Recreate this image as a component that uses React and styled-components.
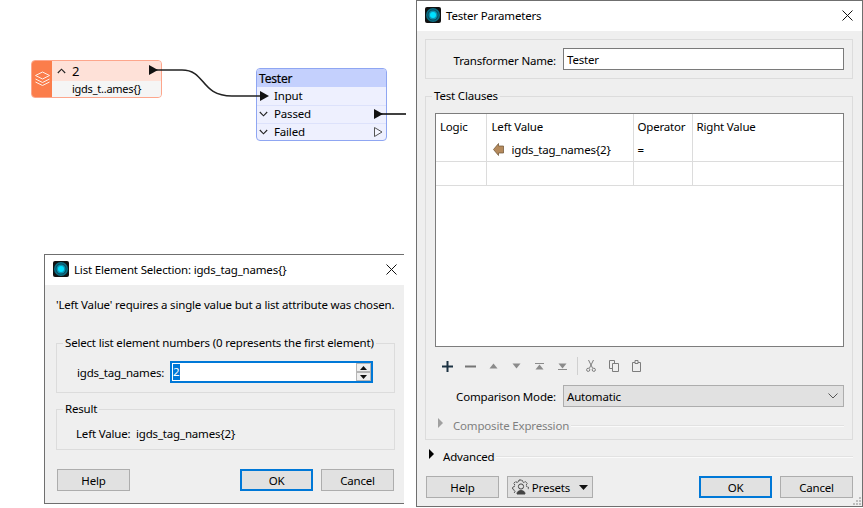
import React from "react";
import styled, { createGlobalStyle } from "styled-components";

const Global = createGlobalStyle`
  html, body { margin: 0; padding: 0; background: #fff; }
  body { width: 863px; height: 508px; overflow: hidden; position: relative; font: 11.5px "Noto Sans", "Open Sans", sans-serif; color: #000; }
  * { box-sizing: border-box; }
`;

const Canvas = styled.div`position: relative; width: 863px; height: 508px; overflow: hidden; letter-spacing: -0.18px;`;
const Wires = styled.svg`position: absolute; left: 0; top: 0; width: 863px; height: 508px; pointer-events: none; z-index: 2;`;

const NodeBox = styled.div`
  position: absolute; left: ${p => p.$x}px; top: ${p => p.$y}px; width: ${p => p.$w}px; height: ${p => p.$h}px;
  border: 1px solid ${p => p.$border}; border-radius: 4px; overflow: hidden; background: ${p => p.$bg};
`;
const SourceNode = styled(NodeBox)`display: flex;`;
const SourceStrip = styled.div`width: 20px; background: #fb7d4b; display: flex; align-items: center; justify-content: center;`;
const SourceBody = styled.div`flex: 1; display: flex; flex-direction: column;`;
const SourceHead = styled.div`height: 20px; background: #fee1d8; display: flex; align-items: center; padding-left: 5px; gap: 6px; font-size: 13px;`;
const SourceAttr = styled.div`height: 16px; background: #f5f5f5; padding-left: 20px; line-height: 15px; font-size: 11px; letter-spacing: -0.25px;`;
const NodeTitle = styled.div`height: 18px; background: #c4d0fd; padding-left: 2px; line-height: 19px; font-size: 12px; -webkit-text-stroke: 0.2px #000;`;
const PortRow = styled.div`
  height: 18px; display: flex; align-items: center; padding: 0 0 2px 2px; gap: 6px;
  border-top: ${p => (p.$line ? "1px solid #dde2fb" : "none")};
`;
const PortSpacer = styled.span`width: 9px; display: inline-flex; justify-content: center;`;

const Dialog = styled.div`
  position: absolute; left: ${p => p.$x}px; top: ${p => p.$y}px; width: ${p => p.$w}px; height: ${p => p.$h}px;
  border: 1px solid #6f6f6f; border-right-width: ${p => (p.$open ? 0 : 1)}px; background: #efefef;
  display: flex; flex-direction: column; z-index: 3;
`;
const TitleBar = styled.div`height: 30px; background: #fff; display: flex; align-items: center; padding: 0 0 2px 8px; gap: 5px; flex: none;`;
const TitleText = styled.div`flex: 1;`;
const CloseBox = styled.div`width: 26px; height: 28px; display: flex; align-items: center; justify-content: center; margin-right: ${p => p.$mr}px;`;
const Body = styled.div`flex: 1; display: flex; flex-direction: column; padding: ${p => p.$pad}; position: relative;`;

const NameGroup = styled.div`height: 40px; border: 1px solid #dcdcdc; display: flex; align-items: center; padding-right: 8px;`;
const Label = styled.label`width: ${p => p.$w}px; text-align: right; flex: none; padding: ${p => p.$pt ?? 1}px 7px 0 0; white-space: nowrap;`;
const TextField = styled.div`flex: 1; height: 22px; background: #fff; border: 1px solid #7a7a7a; padding-left: 3px; line-height: 22px;`;

const Group = styled.fieldset`
  margin: ${p => p.$m || 0}; padding: ${p => p.$pad || 0}; border: 1px solid #dcdcdc; min-width: 0; height: ${p => p.$h}px;
  display: block;
`;
const Legend = styled.legend`margin-left: ${p => p.$ml ?? 6}px; padding: 0 2px; line-height: 16px; white-space: nowrap;`;

const TableWrap = styled.div`height: 234px; border: 1px solid #7d7d7d; background: #fff;`;
const Clauses = styled.table`width: 100%; border-collapse: collapse; table-layout: fixed;`;
const Th = styled.th`
  width: ${p => (p.$w ? p.$w + "px" : "auto")}; height: 23px; font-weight: 400; text-align: left; padding: 2px 0 0 ${p => p.$pl ?? 4}px;
  border-right: ${p => (p.$last ? 0 : "1px solid #dcdcdc")};
`;
const Td = styled.td`
  height: ${p => p.$h}px; padding: 1px 0 0 4px; border-right: ${p => (p.$last ? 0 : "1px solid #dcdcdc")};
  border-bottom: 1px solid #dcdcdc; white-space: nowrap;
`;
const AttrCell = styled.div`display: flex; align-items: center; gap: 8px; padding-left: 2px;`;

const Toolbar = styled.div`height: 38px; display: flex; align-items: center; padding-left: 1px;`;
const ToolSlot = styled.div`width: 23px; height: 20px; display: flex; align-items: center; justify-content: center; flex: none;`;
const ToolSep = styled.div`width: 1px; height: 18px; background: #d0d0d0; margin: 0 1px 0 3px; flex: none;`;

const SelectRow = styled.div`display: flex; align-items: center;`;
const SelectBox = styled.div`
  flex: 1; height: 22px; background: #e1e1e1; border: 1px solid #adadad; display: flex; align-items: center;
  justify-content: space-between; padding: 0 5px 0 3px;
`;
const Collapse = styled.div`display: flex; align-items: center; color: ${p => p.$color}; height: 16px; margin: ${p => p.$m};`;
const CollapseLine = styled.div`flex: 1; height: 1px; background: #e2e2e2; margin-left: 2px; box-shadow: 0 1px 0 #fafafa;`;
const Tri = styled.svg`flex: none; margin: -4px ${p => p.$mr}px 0 0;`;

const Footer = styled.div`display: flex; align-items: center; margin: ${p => p.$m};`;
const Btn = styled.div`
  width: ${p => p.$w || 73}px; height: 22px; background: #e1e1e1; border: ${p => (p.$primary ? "2px solid #0078d7" : "1px solid #adadad")};
  display: flex; align-items: center; justify-content: center; gap: 3px; margin-left: ${p => p.$ml || 0}px; flex: none;
`;
const Grip = styled.svg`position: absolute; right: 0; bottom: 0;`;

const Message = styled.div`margin: 12px 0 0 0; height: 16px; line-height: 16px; white-space: nowrap;`;
const SpinRow = styled.div`display: flex; align-items: center; padding: 10px 21px 0 20px;`;
const SpinLabel = styled.span`width: 93px; flex: none; white-space: nowrap;`;
const SpinField = styled.div`width: 203px; height: 22px; background: #fff; border: 2px solid #0078d7; display: flex; align-items: center; justify-content: space-between; flex: none;`;
const Selected = styled.span`background: #0078d7; color: #fff; width: 7px; height: 16px; line-height: 16px; margin-left: 1px; display: block;`;
const SpinButtons = styled.div`width: 15px; height: 18px; display: flex; flex-direction: column; gap: 0; flex: none;`;
const SpinButton = styled.div`flex: 1; background: #efefef; border: 1px solid #b5b5b5; display: flex; align-items: center; justify-content: center;`;
const ResultText = styled.div`padding: 9px 0 0 19px; white-space: pre;`;

const AppIcon = () => (
  <svg width="16" height="16" viewBox="0 0 16 16">
    <rect width="16" height="16" rx="2" fill="#111" />
    <circle cx="8" cy="8" r="7" fill="#0b6f86" />
    <circle cx="8" cy="8" r="5.500" fill="#0a4e60" />
    <circle cx="8" cy="8" r="4.500" fill="#0d93b0" />
    <circle cx="8" cy="8" r="3" fill="#00e0ff" />
  </svg>
);
const CloseIcon = () => (
  <svg width="11" height="11" viewBox="0 0 11 11"><path d="M.5.5l10 10M10.500.5l-10 10" stroke="#111" strokeWidth="1" fill="none" /></svg>
);
const Layers = () => (
  <svg width="17" height="16" viewBox="0 0 17 16" fill="none" stroke="#ffeee6" strokeWidth="1">
    <path d="M8.500 1l7 3.500-7 3.500-7-3.500z" />
    <path d="M1.500 8l7 3.500 7-3.500" />
    <path d="M1.500 11l7 3.500 7-3.500" />
  </svg>
);
const Caret = ({ up }) => (
  <svg width="9" height="6" viewBox="0 0 9 6" fill="none" stroke="#222" strokeWidth="1.100"><path d={up ? "M.8 5L4.500 1.200 8.200 5" : "M.8 1L4.500 4.800 8.200 1"} /></svg>
);

const Tool = {
  plus: <svg width="11" height="11" viewBox="0 0 11 11"><path d="M5.500 0v11M0 5.500h11" stroke="#1c3242" strokeWidth="2" /></svg>,
  minus: <svg width="11" height="3" viewBox="0 0 11 3"><path d="M0 1.500h11" stroke="#757575" strokeWidth="2" /></svg>,
  up: <svg width="9" height="6" viewBox="0 0 9 6"><path d="M4.500.5L8.500 5.500H.5z" fill="#8b8b8b" /></svg>,
  down: <svg width="9" height="6" viewBox="0 0 9 6"><path d="M4.500 5.500L8.500.5H.5z" fill="#8b8b8b" /></svg>,
  top: <svg width="9" height="7" viewBox="0 0 9 7"><path d="M0 .5h9" stroke="#8b8b8b" /><path d="M4.500 1.500L8.500 6.500H.5z" fill="#8b8b8b" /></svg>,
  bottom: <svg width="9" height="7" viewBox="0 0 9 7"><path d="M0 6.500h9" stroke="#8b8b8b" /><path d="M4.500 5.500L8.500.5H.5z" fill="#8b8b8b" /></svg>,
  cut: <svg width="10" height="12" viewBox="0 0 10 12" fill="none" stroke="#7d7d7d"><path d="M2.500 0L6.500 8M7.500 0L3.500 8" /><circle cx="2.200" cy="9.800" r="1.600" /><circle cx="7.800" cy="9.800" r="1.600" /></svg>,
  copy: <svg width="10" height="12" viewBox="0 0 10 12" fill="none" stroke="#7d7d7d"><path d="M.5.5h5v8h-5z" /><path d="M3.500 3.500h6v8h-6z" fill="#efefef" /></svg>,
  paste: <svg width="9" height="12" viewBox="0 0 9 12" fill="none" stroke="#7d7d7d"><path d="M.5 2.500h8v9h-8z" /><path d="M3 .5h3v3H3z" fill="#efefef" /></svg>,
};

const Gear = () => (
  <svg width="17" height="16" viewBox="0 0 17 16" fill="none" stroke="#444" strokeWidth="1">
    <path d="M7 1h3l.4 1.700 1.500.7 1.600-.8 1.700 1.900-1 1.400.4 1.600 1.700.6v2.400" strokeDasharray="2 .6" />
    <path d="M7 1l-.4 1.700-1.500.7-1.600-.8L1.800 4.500l1 1.400-.4 1.600-1.700.6v2.400l1.700.6.6 1.400-.8 1.400" strokeDasharray="2 .6" />
    <circle cx="9" cy="7.500" r="2.600" />
    <path d="M5 15c0-2.400 1.800-3.400 4-3.400s4 1 4 3.400z" fill="#444" />
  </svg>
);
const TriRight = ({ color = "#000", mr = 0 }) => (
  <Tri $mr={mr} width="5" height="10" viewBox="0 0 5 10"><path d="M0 0l5 5-5 5z" fill={color} /></Tri>
);

export default function App() {
  return (
    <Canvas>
      <Global />
      <SourceNode $x={31} $y={60} $w={131} $h={38} $border="#fda68c" $bg="#fee1d8">
        <SourceStrip><Layers /></SourceStrip>
        <SourceBody>
          <SourceHead><Caret up /><span>2</span></SourceHead>
          <SourceAttr>igds_t..ames{"{}"}</SourceAttr>
        </SourceBody>
      </SourceNode>
      <NodeBox $x={256} $y={68} $w={131} $h={73} $border="#8fa6f2" $bg="#eef0fe">
        <NodeTitle>Tester</NodeTitle>
        <PortRow><PortSpacer /><span>Input</span></PortRow>
        <PortRow $line><PortSpacer><Caret /></PortSpacer><span>Passed</span></PortRow>
        <PortRow $line><PortSpacer><Caret /></PortSpacer><span>Failed</span></PortRow>
      </NodeBox>
      <Wires viewBox="0 0 863 508">
        <path d="M152 70H182C206 70 200 96 232 96H262" stroke="#222" strokeWidth="1.600" fill="none" />
        <path d="M378 114H406" stroke="#111" strokeWidth="1.600" fill="none" />
        <path d="M149 65l9 5-9 5z" fill="#111" />
        <path d="M260 91l9 5-9 5z" fill="#111" />
        <path d="M374 109l9 5-9 5z" fill="#111" />
        <path d="M374.500 127.500l7.500 4.500-7.500 4.500z" fill="#f4f5ff" stroke="#555" />
      </Wires>

      <Dialog $x={44} $y={254} $w={360} $h={250} $open>
        <TitleBar>
          <AppIcon />
          <TitleText>List Element Selection: igds_tag_names{"{}"}</TitleText>
          <CloseBox $mr={0}><CloseIcon /></CloseBox>
        </TitleBar>
        <Body $pad="0 9px 0 11px">
          <Message>'Left Value' requires a single value but a list attribute was chosen.</Message>
          <Group $m="22px 0 0 0" $h={58}>
            <Legend>Select list element numbers (0 represents the first element)</Legend>
            <SpinRow>
              <SpinLabel>igds_tag_names:</SpinLabel>
              <SpinField>
                <Selected>2</Selected>
                <SpinButtons>
                  <SpinButton><svg width="7" height="4" viewBox="0 0 7 4"><path d="M3.500 0l3.500 4H0z" fill="#111" /></svg></SpinButton>
                  <SpinButton><svg width="7" height="4" viewBox="0 0 7 4"><path d="M3.500 4l3.500-4H0z" fill="#111" /></svg></SpinButton>
                </SpinButtons>
              </SpinField>
            </SpinRow>
          </Group>
          <Group $m="8px 0 0 0" $h={49}>
            <Legend>Result</Legend>
            <ResultText>Left Value:  igds_tag_names{"{2}"}</ResultText>
          </Group>
          <Footer $m="19px 0 0 1px">
            <Btn>Help</Btn>
            <Btn $primary $ml={110}>OK</Btn>
            <Btn $ml={8}>Cancel</Btn>
          </Footer>
        </Body>
      </Dialog>

      <Dialog $x={416} $y={0} $w={447} $h={507}>
        <TitleBar>
          <AppIcon />
          <TitleText>Tester Parameters</TitleText>
          <CloseBox $mr={2}><CloseIcon /></CloseBox>
        </TitleBar>
        <Body $pad="8px 9px 0 8px">
          <NameGroup>
            <Label $w={137} $pt={2}>Transformer Name:</Label>
            <TextField>Tester</TextField>
          </NameGroup>
          <Group $m="9px 0 0 0" $h={352} $pad="9px 8px 0 9px">
            <Legend $ml={-3}>Test Clauses</Legend>
            <TableWrap>
              <Clauses>
                <thead>
                  <tr>
                    <Th $w={50}>Logic</Th>
                    <Th $w={147} $pl={5}>Left Value</Th>
                    <Th $w={59}>Operator</Th>
                    <Th $last>Right Value</Th>
                  </tr>
                </thead>
                <tbody>
                  <tr>
                    <Td $h={24} />
                    <Td $h={24}>
                      <AttrCell>
                        <svg width="11" height="13" viewBox="0 0 11 13"><path d="M.5 6.500L5.500.5V3H10.500V10H5.500V12.500Z" fill="#b58a5c" stroke="#6b5030" strokeWidth=".7" /></svg>
                        <span>igds_tag_names{"{2}"}</span>
                      </AttrCell>
                    </Td>
                    <Td $h={24}>=</Td>
                    <Td $h={24} $last />
                  </tr>
                  <tr>
                    <Td $h={24} />
                    <Td $h={24} />
                    <Td $h={24} />
                    <Td $h={24} $last />
                  </tr>
                </tbody>
              </Clauses>
            </TableWrap>
            <Toolbar>
              <ToolSlot>{Tool.plus}</ToolSlot>
              <ToolSlot>{Tool.minus}</ToolSlot>
              <ToolSlot>{Tool.up}</ToolSlot>
              <ToolSlot>{Tool.down}</ToolSlot>
              <ToolSlot>{Tool.top}</ToolSlot>
              <ToolSlot>{Tool.bottom}</ToolSlot>
              <ToolSep />
              <ToolSlot>{Tool.cut}</ToolSlot>
              <ToolSlot>{Tool.copy}</ToolSlot>
              <ToolSlot>{Tool.paste}</ToolSlot>
            </Toolbar>
            <SelectRow>
              <Label $w={128}>Comparison Mode:</Label>
              <SelectBox>
                <span>Automatic</span>
                <svg width="10" height="6" viewBox="0 0 10 6" fill="none" stroke="#555"><path d="M.5.5L5 5 9.500.5" /></svg>
              </SelectBox>
            </SelectRow>
            <Collapse $color="#7f7f7f" $m="10px 0 0 3px">
              <TriRight color="#a0a0a0" mr={10} />
              <span>Composite Expression</span>
              <CollapseLine />
            </Collapse>
          </Group>
          <Collapse $color="#000" $m="8px 0 0 4px">
            <TriRight color="#000" mr={9} />
            <span>Advanced</span>
            <CollapseLine />
          </Collapse>
          <Footer $m="12px 0 0 1px">
            <Btn>Help</Btn>
            <Btn $w={86} $ml={8}><Gear /><span>Presets</span><svg width="9" height="5" viewBox="0 0 9 5" style={{ marginLeft: 6 }}><path d="M0 0h9L4.500 5z" fill="#111" /></svg></Btn>
            <Btn $primary $ml={106}>OK</Btn>
            <Btn $ml={8}>Cancel</Btn>
          </Footer>
          <Grip width="10" height="10" viewBox="0 0 10 10" fill="#bdbdbd"><rect x="7" y="1" width="2" height="2" /><rect x="4" y="4" width="2" height="2" /><rect x="7" y="4" width="2" height="2" /><rect x="1" y="7" width="2" height="2" /><rect x="4" y="7" width="2" height="2" /><rect x="7" y="7" width="2" height="2" /></Grip>
        </Body>
      </Dialog>
    </Canvas>
  );
}
